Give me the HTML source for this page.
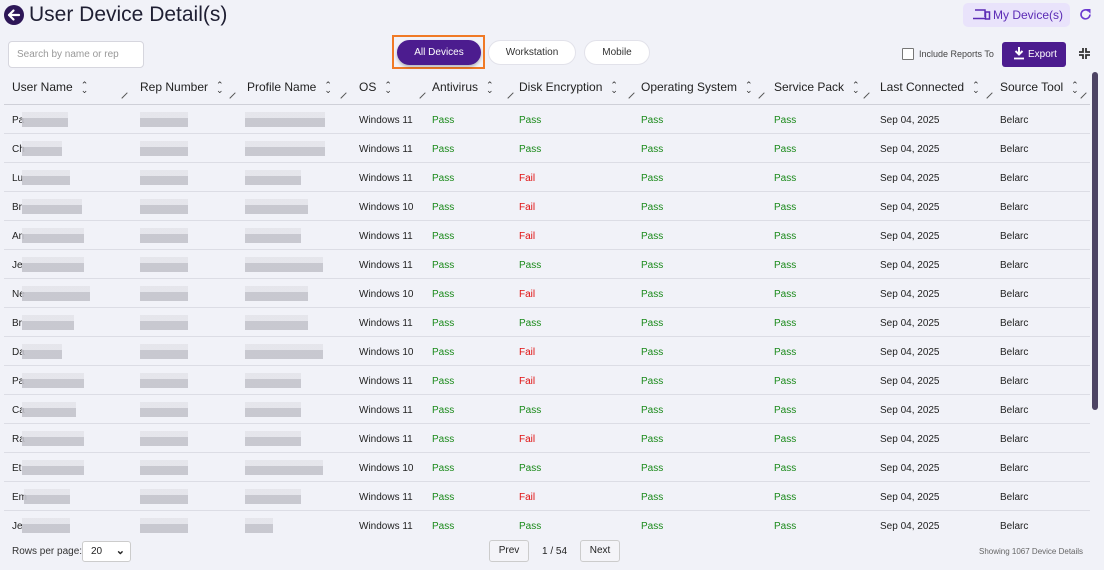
<!DOCTYPE html>
<html><head><meta charset="utf-8"><style>
*{box-sizing:border-box;margin:0;padding:0}
body{width:1104px;height:570px;background:#f1f2f8;font-family:"Liberation Sans",sans-serif;color:#222;position:relative;overflow:hidden}
.abs{position:absolute}
.title{left:29px;top:3px;font-size:21px;color:#1f1f33}
.back{left:4px;top:5px;width:20px;height:20px;border-radius:50%;background:#2d1657}
.search{left:8px;top:41px;width:136px;height:27px;background:#fff;border:1px solid #d6d6de;border-radius:4px;font-size:10px;color:#999;padding:7px 8px}
.pill{top:40px;height:25px;border-radius:13px;background:#fff;border:1px solid #e2e2ea;font-size:10px;color:#333;text-align:center;line-height:23px}
.hdr{top:80px;font-size:12px;color:#222}
.sort{display:inline-block;font-size:9px;margin-left:8px;vertical-align:middle;line-height:5px;color:#333}
.rz{top:94px;width:8px;height:8px;border-top:1px solid #555;transform:rotate(-45deg);}
.line{left:4px;width:1086px;height:1px;background:#dcdde5}
.c{font-size:10px}
.g{color:#1a8a1a}.r{color:#e01010}
.bl{height:15px;margin-top:-2px;background:linear-gradient(#e4e4ea 0 40%,#c4c4cc 40%);opacity:.9}
</style></head><body>
<div class="abs back"><svg width="20" height="20" viewBox="0 0 20 20"><path d="M15 10H5M9.5 5.5L5 10l4.5 4.5" stroke="#fff" stroke-width="2.2" fill="none" stroke-linecap="round" stroke-linejoin="round"/></svg></div>
<div class="abs title">User Device Detail(s)</div>
<div class="abs" style="left:963px;top:3px;width:107px;height:24px;background:#e9e3fb;border-radius:5px;color:#5b2bb5;font-size:12px;line-height:24px;padding-left:30px">My Device(s)</div>
<svg class="abs" style="left:973px;top:9px" width="18" height="12" viewBox="0 0 18 12"><path d="M2 1h10v7M0 9.5h12" stroke="#5b2bb5" stroke-width="1.5" fill="none"/><rect x="12.5" y="3" width="4" height="7" stroke="#5b2bb5" stroke-width="1.5" fill="none"/></svg>
<svg class="abs" style="left:1079px;top:8px" width="13" height="13" viewBox="0 0 13 13"><path d="M11 6.5A4.5 4.5 0 1 1 9.5 3" stroke="#6b3ad0" stroke-width="1.6" fill="none"/><path d="M8 1.5h3v3z" fill="#6b3ad0" stroke="#6b3ad0"/></svg>
<div class="abs search">Search by name or rep</div>
<div class="abs" style="left:392px;top:35px;width:93px;height:34px;border:2px solid #f07a26"></div>
<div class="abs pill" style="left:397px;top:40px;width:84px;background:#4c1c8f;color:#fff;border-color:#4c1c8f;box-shadow:0 2px 3px rgba(0,0,0,.25)">All Devices</div>
<div class="abs pill" style="left:488px;width:88px">Workstation</div>
<div class="abs pill" style="left:584px;width:66px">Mobile</div>
<div class="abs" style="left:902px;top:48px;width:12px;height:12px;border:1px solid #777;background:#fff;border-radius:1px"></div>
<div class="abs" style="left:919px;top:49px;font-size:9px;color:#444">Include Reports To</div>
<div class="abs" style="left:1002px;top:42px;width:64px;height:25px;background:#4c1c8f;border-radius:3px;color:#fff;font-size:10px;line-height:25px;padding-left:26px">Export</div>
<svg class="abs" style="left:1013px;top:47px" width="12" height="13" viewBox="0 0 12 13"><path d="M6 0v7M2.5 4l3.5 3.5L9.5 4" stroke="#fff" stroke-width="2" fill="none"/><path d="M1 11.5h10" stroke="#fff" stroke-width="1.8"/></svg>
<svg class="abs" style="left:1079px;top:48px" width="11" height="11" viewBox="0 0 11 11"><path d="M4 0v4H0M7 0v4h4M4 11V7H0M7 11V7h4" stroke="#333" stroke-width="1.8" fill="none"/></svg>
<div class="abs" style="left:1092px;top:72px;width:6px;height:338px;background:#4d4464;border-radius:3px"></div>

<div class="abs hdr" style="left:12px">User Name<span class="sort">⌃<br>⌄</span></div>
<div class="abs hdr" style="left:140px">Rep Number<span class="sort">⌃<br>⌄</span></div>
<div class="abs hdr" style="left:247px">Profile Name<span class="sort">⌃<br>⌄</span></div>
<div class="abs hdr" style="left:359px">OS<span class="sort">⌃<br>⌄</span></div>
<div class="abs hdr" style="left:432px">Antivirus<span class="sort">⌃<br>⌄</span></div>
<div class="abs hdr" style="left:519px">Disk Encryption<span class="sort">⌃<br>⌄</span></div>
<div class="abs hdr" style="left:641px">Operating System<span class="sort">⌃<br>⌄</span></div>
<div class="abs hdr" style="left:774px">Service Pack<span class="sort">⌃<br>⌄</span></div>
<div class="abs hdr" style="left:880px">Last Connected<span class="sort">⌃<br>⌄</span></div>
<div class="abs hdr" style="left:1000px">Source Tool<span class="sort">⌃<br>⌄</span></div>
<div class="abs rz" style="left:123px"></div><div class="abs rz" style="left:231px"></div><div class="abs rz" style="left:342px"></div><div class="abs rz" style="left:421px"></div><div class="abs rz" style="left:509px"></div><div class="abs rz" style="left:630px"></div><div class="abs rz" style="left:760px"></div><div class="abs rz" style="left:865px"></div><div class="abs rz" style="left:988px"></div><div class="abs rz" style="left:1082px"></div>
<div class="abs line" style="top:104px;background:#cfd0d8"></div>

<div class="abs" style="left:12px;top:546px;font-size:10px;color:#333">Rows per page:</div>
<div class="abs" style="left:82px;top:541px;width:49px;height:21px;background:#fff;border:1px solid #ccc;border-radius:3px;font-size:10px;padding:4px 8px">20 <span style="position:absolute;right:5px;top:2px;font-weight:bold;font-size:11px">⌄</span></div>
<div class="abs" style="left:489px;top:540px;width:40px;height:22px;background:#f4f4f8;border:1px solid #ccc;border-radius:3px;font-size:10px;text-align:center;line-height:20px">Prev</div>
<div class="abs" style="left:542px;top:546px;font-size:10px">1 / 54</div>
<div class="abs" style="left:580px;top:540px;width:40px;height:22px;background:#f4f4f8;border:1px solid #ccc;border-radius:3px;font-size:10px;text-align:center;line-height:20px">Next</div>
<div class="abs" style="left:979px;top:547px;font-size:8px;color:#666">Showing 1067 Device Details</div>

<div class="abs c" style="left:12px;top:115px">Pa</div><div class="abs bl" style="left:22px;top:114px;width:46px"></div><div class="abs bl" style="left:140px;top:114px;width:48px"></div><div class="abs bl" style="left:245px;top:114px;width:80px"></div><div class="abs c" style="left:359px;top:115px">Windows 11</div><div class="abs c g" style="left:432px;top:115px">Pass</div><div class="abs c g" style="left:519px;top:115px">Pass</div><div class="abs c g" style="left:641px;top:115px">Pass</div><div class="abs c g" style="left:774px;top:115px">Pass</div><div class="abs c" style="left:880px;top:115px">Sep 04, 2025</div><div class="abs c" style="left:1000px;top:115px">Belarc</div><div class="abs line" style="top:133px"></div>
<div class="abs c" style="left:12px;top:144px">Ch</div><div class="abs bl" style="left:22px;top:143px;width:40px"></div><div class="abs bl" style="left:140px;top:143px;width:48px"></div><div class="abs bl" style="left:245px;top:143px;width:80px"></div><div class="abs c" style="left:359px;top:144px">Windows 11</div><div class="abs c g" style="left:432px;top:144px">Pass</div><div class="abs c g" style="left:519px;top:144px">Pass</div><div class="abs c g" style="left:641px;top:144px">Pass</div><div class="abs c g" style="left:774px;top:144px">Pass</div><div class="abs c" style="left:880px;top:144px">Sep 04, 2025</div><div class="abs c" style="left:1000px;top:144px">Belarc</div><div class="abs line" style="top:162px"></div>
<div class="abs c" style="left:12px;top:173px">Lu</div><div class="abs bl" style="left:22px;top:172px;width:48px"></div><div class="abs bl" style="left:140px;top:172px;width:48px"></div><div class="abs bl" style="left:245px;top:172px;width:56px"></div><div class="abs c" style="left:359px;top:173px">Windows 11</div><div class="abs c g" style="left:432px;top:173px">Pass</div><div class="abs c r" style="left:519px;top:173px">Fail</div><div class="abs c g" style="left:641px;top:173px">Pass</div><div class="abs c g" style="left:774px;top:173px">Pass</div><div class="abs c" style="left:880px;top:173px">Sep 04, 2025</div><div class="abs c" style="left:1000px;top:173px">Belarc</div><div class="abs line" style="top:191px"></div>
<div class="abs c" style="left:12px;top:202px">Br</div><div class="abs bl" style="left:22px;top:201px;width:60px"></div><div class="abs bl" style="left:140px;top:201px;width:48px"></div><div class="abs bl" style="left:245px;top:201px;width:63px"></div><div class="abs c" style="left:359px;top:202px">Windows 10</div><div class="abs c g" style="left:432px;top:202px">Pass</div><div class="abs c r" style="left:519px;top:202px">Fail</div><div class="abs c g" style="left:641px;top:202px">Pass</div><div class="abs c g" style="left:774px;top:202px">Pass</div><div class="abs c" style="left:880px;top:202px">Sep 04, 2025</div><div class="abs c" style="left:1000px;top:202px">Belarc</div><div class="abs line" style="top:220px"></div>
<div class="abs c" style="left:12px;top:231px">An</div><div class="abs bl" style="left:22px;top:230px;width:62px"></div><div class="abs bl" style="left:140px;top:230px;width:48px"></div><div class="abs bl" style="left:245px;top:230px;width:56px"></div><div class="abs c" style="left:359px;top:231px">Windows 11</div><div class="abs c g" style="left:432px;top:231px">Pass</div><div class="abs c r" style="left:519px;top:231px">Fail</div><div class="abs c g" style="left:641px;top:231px">Pass</div><div class="abs c g" style="left:774px;top:231px">Pass</div><div class="abs c" style="left:880px;top:231px">Sep 04, 2025</div><div class="abs c" style="left:1000px;top:231px">Belarc</div><div class="abs line" style="top:249px"></div>
<div class="abs c" style="left:12px;top:260px">Je</div><div class="abs bl" style="left:22px;top:259px;width:62px"></div><div class="abs bl" style="left:140px;top:259px;width:48px"></div><div class="abs bl" style="left:245px;top:259px;width:78px"></div><div class="abs c" style="left:359px;top:260px">Windows 11</div><div class="abs c g" style="left:432px;top:260px">Pass</div><div class="abs c g" style="left:519px;top:260px">Pass</div><div class="abs c g" style="left:641px;top:260px">Pass</div><div class="abs c g" style="left:774px;top:260px">Pass</div><div class="abs c" style="left:880px;top:260px">Sep 04, 2025</div><div class="abs c" style="left:1000px;top:260px">Belarc</div><div class="abs line" style="top:278px"></div>
<div class="abs c" style="left:12px;top:289px">Ne</div><div class="abs bl" style="left:22px;top:288px;width:68px"></div><div class="abs bl" style="left:140px;top:288px;width:48px"></div><div class="abs bl" style="left:245px;top:288px;width:63px"></div><div class="abs c" style="left:359px;top:289px">Windows 10</div><div class="abs c g" style="left:432px;top:289px">Pass</div><div class="abs c r" style="left:519px;top:289px">Fail</div><div class="abs c g" style="left:641px;top:289px">Pass</div><div class="abs c g" style="left:774px;top:289px">Pass</div><div class="abs c" style="left:880px;top:289px">Sep 04, 2025</div><div class="abs c" style="left:1000px;top:289px">Belarc</div><div class="abs line" style="top:307px"></div>
<div class="abs c" style="left:12px;top:318px">Br</div><div class="abs bl" style="left:22px;top:317px;width:52px"></div><div class="abs bl" style="left:140px;top:317px;width:48px"></div><div class="abs bl" style="left:245px;top:317px;width:63px"></div><div class="abs c" style="left:359px;top:318px">Windows 11</div><div class="abs c g" style="left:432px;top:318px">Pass</div><div class="abs c g" style="left:519px;top:318px">Pass</div><div class="abs c g" style="left:641px;top:318px">Pass</div><div class="abs c g" style="left:774px;top:318px">Pass</div><div class="abs c" style="left:880px;top:318px">Sep 04, 2025</div><div class="abs c" style="left:1000px;top:318px">Belarc</div><div class="abs line" style="top:336px"></div>
<div class="abs c" style="left:12px;top:347px">Da</div><div class="abs bl" style="left:22px;top:346px;width:40px"></div><div class="abs bl" style="left:140px;top:346px;width:48px"></div><div class="abs bl" style="left:245px;top:346px;width:78px"></div><div class="abs c" style="left:359px;top:347px">Windows 10</div><div class="abs c g" style="left:432px;top:347px">Pass</div><div class="abs c r" style="left:519px;top:347px">Fail</div><div class="abs c g" style="left:641px;top:347px">Pass</div><div class="abs c g" style="left:774px;top:347px">Pass</div><div class="abs c" style="left:880px;top:347px">Sep 04, 2025</div><div class="abs c" style="left:1000px;top:347px">Belarc</div><div class="abs line" style="top:365px"></div>
<div class="abs c" style="left:12px;top:376px">Pa</div><div class="abs bl" style="left:22px;top:375px;width:62px"></div><div class="abs bl" style="left:140px;top:375px;width:48px"></div><div class="abs bl" style="left:245px;top:375px;width:56px"></div><div class="abs c" style="left:359px;top:376px">Windows 11</div><div class="abs c g" style="left:432px;top:376px">Pass</div><div class="abs c r" style="left:519px;top:376px">Fail</div><div class="abs c g" style="left:641px;top:376px">Pass</div><div class="abs c g" style="left:774px;top:376px">Pass</div><div class="abs c" style="left:880px;top:376px">Sep 04, 2025</div><div class="abs c" style="left:1000px;top:376px">Belarc</div><div class="abs line" style="top:394px"></div>
<div class="abs c" style="left:12px;top:405px">Ca</div><div class="abs bl" style="left:22px;top:404px;width:54px"></div><div class="abs bl" style="left:140px;top:404px;width:48px"></div><div class="abs bl" style="left:245px;top:404px;width:56px"></div><div class="abs c" style="left:359px;top:405px">Windows 11</div><div class="abs c g" style="left:432px;top:405px">Pass</div><div class="abs c g" style="left:519px;top:405px">Pass</div><div class="abs c g" style="left:641px;top:405px">Pass</div><div class="abs c g" style="left:774px;top:405px">Pass</div><div class="abs c" style="left:880px;top:405px">Sep 04, 2025</div><div class="abs c" style="left:1000px;top:405px">Belarc</div><div class="abs line" style="top:423px"></div>
<div class="abs c" style="left:12px;top:434px">Ra</div><div class="abs bl" style="left:22px;top:433px;width:62px"></div><div class="abs bl" style="left:140px;top:433px;width:48px"></div><div class="abs bl" style="left:245px;top:433px;width:56px"></div><div class="abs c" style="left:359px;top:434px">Windows 11</div><div class="abs c g" style="left:432px;top:434px">Pass</div><div class="abs c r" style="left:519px;top:434px">Fail</div><div class="abs c g" style="left:641px;top:434px">Pass</div><div class="abs c g" style="left:774px;top:434px">Pass</div><div class="abs c" style="left:880px;top:434px">Sep 04, 2025</div><div class="abs c" style="left:1000px;top:434px">Belarc</div><div class="abs line" style="top:452px"></div>
<div class="abs c" style="left:12px;top:463px">Et</div><div class="abs bl" style="left:22px;top:462px;width:62px"></div><div class="abs bl" style="left:140px;top:462px;width:48px"></div><div class="abs bl" style="left:245px;top:462px;width:78px"></div><div class="abs c" style="left:359px;top:463px">Windows 10</div><div class="abs c g" style="left:432px;top:463px">Pass</div><div class="abs c g" style="left:519px;top:463px">Pass</div><div class="abs c g" style="left:641px;top:463px">Pass</div><div class="abs c g" style="left:774px;top:463px">Pass</div><div class="abs c" style="left:880px;top:463px">Sep 04, 2025</div><div class="abs c" style="left:1000px;top:463px">Belarc</div><div class="abs line" style="top:481px"></div>
<div class="abs c" style="left:12px;top:492px">Em</div><div class="abs bl" style="left:24px;top:491px;width:46px"></div><div class="abs bl" style="left:140px;top:491px;width:48px"></div><div class="abs bl" style="left:245px;top:491px;width:56px"></div><div class="abs c" style="left:359px;top:492px">Windows 11</div><div class="abs c g" style="left:432px;top:492px">Pass</div><div class="abs c r" style="left:519px;top:492px">Fail</div><div class="abs c g" style="left:641px;top:492px">Pass</div><div class="abs c g" style="left:774px;top:492px">Pass</div><div class="abs c" style="left:880px;top:492px">Sep 04, 2025</div><div class="abs c" style="left:1000px;top:492px">Belarc</div><div class="abs line" style="top:510px"></div>
<div class="abs c" style="left:12px;top:521px">Je</div><div class="abs bl" style="left:22px;top:520px;width:48px"></div><div class="abs bl" style="left:140px;top:520px;width:48px"></div><div class="abs bl" style="left:245px;top:520px;width:28px"></div><div class="abs c" style="left:359px;top:521px">Windows 11</div><div class="abs c g" style="left:432px;top:521px">Pass</div><div class="abs c g" style="left:519px;top:521px">Pass</div><div class="abs c g" style="left:641px;top:521px">Pass</div><div class="abs c g" style="left:774px;top:521px">Pass</div><div class="abs c" style="left:880px;top:521px">Sep 04, 2025</div><div class="abs c" style="left:1000px;top:521px">Belarc</div>
</body></html>
